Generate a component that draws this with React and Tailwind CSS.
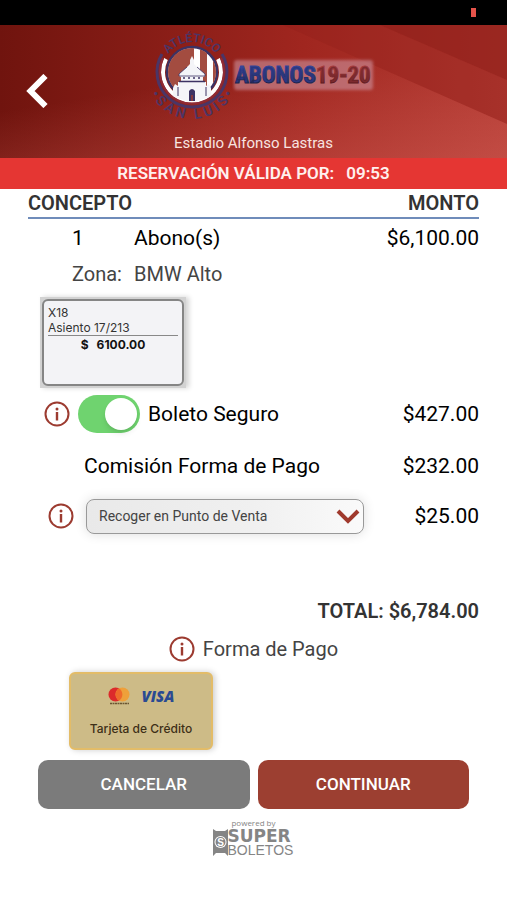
import React, { useState } from "react";

const InfoButton = ({ label }) => (
  <button type="button" aria-label={label} className="block shrink-0">
    <svg width="26" height="26" viewBox="0 0 26 26" fill="none">
      <circle cx="13" cy="13" r="11.5" stroke="#9c3b30" strokeWidth="2" />
      <circle cx="13" cy="8" r="1.5" fill="#9c3b30" />
      <path d="M13 11V19.500" stroke="#9c3b30" strokeWidth="2.4" />
    </svg>
  </button>
);

const ClubBadge = () => (
  <svg className="overflow-visible" width="80" height="96" viewBox="0 -6 80 96" role="img" aria-label="Atlético San Luis">
    <defs>
      <path id="badge-top" d="M10 39A30 30 0 0 1 70 39" />
      <path id="badge-bottom" d="M-7 39A47 47 0 0 0 87 39" />
      <clipPath id="badge-clip">
        <circle cx="40" cy="39" r="24" />
      </clipPath>
    </defs>
    <g fill="none">
      <path d="M10 21A35 35 0 1 0 70 21" stroke="#4b3566" strokeWidth="3" />
      <path d="M14 26A29 29 0 1 0 66 26" stroke="#fff" strokeWidth="4" />
      <path d="M11 25A32 32 0 1 0 69 25" stroke="#8f2b36" strokeWidth="2" />
    </g>
    <circle cx="40" cy="39" r="25" fill="#fff" stroke="#3c3263" strokeWidth="2.500" />
    <g clipPath="url(#badge-clip)">
      <path d="M14 12H42V66H14Z" fill="#a34c40" />
      <path d="M48 12H55V66H48ZM61 12H68V66H61Z" fill="#a34c40" />
      <path d="M12 61H68V66H12Z" fill="#fff" />
    </g>
    <path
      d="M40 23L42 27V31L45 34L53 41V43L51 44V49H54V53L57 51L59 55V63Q40 73 21 63V55L23 51L26 53V49H29V44L27 43V41L35 34L38 31V27Z"
      fill="#f4f4f8"
    />
    <path d="M35 34L27 41V43H53V41L45 34" fill="none" stroke="#3c3263" strokeWidth="0.8" />
    <path d="M27 48.500H53" stroke="#3c3263" strokeWidth="1.500" />
    <path d="M31 45H50" stroke="#3c3263" strokeWidth="1.500" strokeDasharray="2 3" />
    <path d="M37 68V58Q40 54 43 58V68Z" fill="#3c3263" />
    <path d="M26 54V63M54 54V63" stroke="#3c3263" strokeWidth="1" />
    <path d="M40 62V68" stroke="#9c3b30" strokeWidth="1.500" />
    <g fill="#4b3566" fontFamily="Roboto, sans-serif" fontWeight="600" textAnchor="middle">
      <text fontSize="12">
        <textPath href="#badge-top" startOffset="50%">ATLÉTICO</textPath>
      </text>
      <text fontSize="14">
        <textPath href="#badge-bottom" startOffset="50%">{"•\u00a0S\u00a0A\u00a0N\u00a0\u00a0\u00a0L\u00a0U\u00a0I\u00a0S\u00a0•"}</textPath>
      </text>
    </g>
  </svg>
);

const SeasonTitle = () => (
  <svg width="144" height="40" viewBox="0 0 144 40" role="img" aria-label="Abonos 19-20">
    <defs>
      <linearGradient id="season-blue" x1="0" y1="0" x2="0" y2="1">
        <stop offset="0.2" stopColor="#34459a" />
        <stop offset="0.9" stopColor="#191c3c" />
      </linearGradient>
      <linearGradient id="season-red" x1="0" y1="0" x2="0" y2="1">
        <stop offset="0.2" stopColor="#a33a3c" />
        <stop offset="0.9" stopColor="#4d1418" />
      </linearGradient>
      <filter id="season-glow" x="-10%" y="-30%" width="120%" height="160%">
        <feGaussianBlur stdDeviation="1.5" />
      </filter>
    </defs>
    <rect x="2" y="5" width="139" height="30" rx="3" fill="#c98a94" opacity="0.65" filter="url(#season-glow)" />
    <g
      fontFamily="'Roboto Condensed', 'Liberation Sans Narrow', 'Liberation Sans', sans-serif"
      fontSize="23"
      fontWeight="700"
      strokeWidth="1"
    >
      <text x="3" y="28" fill="#2b3780" stroke="url(#season-blue)">
        ABONOS
        <tspan fill="#7c2a2e" stroke="url(#season-red)">19-20</tspan>
      </text>
    </g>
  </svg>
);

const Header = () => (
  <header className="relative h-[133px] overflow-hidden bg-linear-to-r from-[#70140e] via-[#a0261f] via-60% to-[#b03830]">
    <svg className="absolute inset-0 h-full w-full" viewBox="0 0 507 133" preserveAspectRatio="none" aria-hidden="true">
      <defs>
        <linearGradient id="header-shine" x1="0.4" y1="0" x2="1" y2="1">
          <stop offset="0.3" stopColor="#d9645c" stopOpacity="0" />
          <stop offset="1" stopColor="#d9645c" stopOpacity="0.45" />
        </linearGradient>
      </defs>
      <path d="M283 0H380L507 55V99Z" fill="#8c1d17" opacity="0.25" />
      <path d="M380 0H507V55Z" fill="#8c1d17" opacity="0.6" />
      <path d="M0 0H283L507 99V133H0Z" fill="url(#header-shine)" />
    </svg>
    <button type="button" aria-label="Regresar" className="absolute top-[49px] left-[26px]">
      <svg width="22" height="34" viewBox="0 0 22 34" fill="none">
        <path d="M19.500 2L4.500 17L19.500 32" stroke="#fff" strokeWidth="6" />
      </svg>
    </button>
    <div className="relative flex flex-col items-center">
      <div className="flex h-[109px] items-start pt-[2px] pl-5">
        <ClubBadge />
        <div className="pt-7">
          <SeasonTitle />
        </div>
      </div>
      <p className="text-[15px] leading-[18px] text-[#f8e4e0]">Estadio Alfonso Lastras</p>
    </div>
  </header>
);

const Ticket = () => (
  <div className="ml-3 h-[91px] w-[146px] bg-[#d2d2d2] p-[2px] shadow-[3px_0_5px_#d4d4d4]">
    <div className="h-full rounded-md border-2 border-[#858585] bg-[#f3f3f6] px-1 pt-1 font-[Inter,sans-serif] text-xs leading-[15px] text-[#333]">
      <p>X18</p>
      <p className="border-b border-[#888]">Asiento 17/213</p>
      <p className="flex justify-center gap-2 pt-px font-bold text-[#111]">
        <span>$</span>
        <span>6100.00</span>
      </p>
    </div>
  </div>
);

const PoweredBy = () => (
  <footer className="mx-auto mt-2 w-[82px] text-[#858585]">
    <p className="text-center font-['Open_Sans',sans-serif] text-[8px] leading-3">powered by</p>
    <div className="flex">
      <svg width="15" height="27" viewBox="0 0 15 27" aria-hidden="true">
        <path d="M0 0L3 2H12L15 0V27L12 24H3L0 27Z" fill="#858585" />
        <circle cx="7.500" cy="13" r="6" fill="#fff" />
        <circle cx="7.500" cy="13" r="5" fill="#858585" />
        <text x="7.500" y="16.500" textAnchor="middle" fontSize="10" fontWeight="700" fill="#fff" fontFamily="Liberation Sans, sans-serif">S</text>
      </svg>
      <div>
        <p className="font-['DejaVu_Sans',sans-serif] text-[17px] leading-[14px] font-bold">SUPER</p>
        <p className="font-['Liberation_Sans',sans-serif] text-[14px] leading-[14px]">BOLETOS</p>
      </div>
    </div>
  </footer>
);

export default function App() {
  const [insured, setInsured] = useState(true);
  const [delivery, setDelivery] = useState("venta");

  return (
    <div className="min-h-screen bg-white font-[Roboto,sans-serif] text-black">
      <div className="flex h-[25px] items-center justify-end bg-black pr-[31px]">
        <span className="h-[9px] w-[5px] bg-[#e5534a]"></span>
      </div>
      <Header />
      <p className="flex h-[31px] items-center justify-center gap-3 bg-[#e53633] text-[17px] font-semibold text-[#fff0ee]">
        <span>RESERVACIÓN VÁLIDA POR:</span>
        <span>09:53</span>
      </p>

      <main className="px-7">
        <table className="w-full text-[21px] leading-[26px]">
          <thead>
            <tr className="h-[29px] border-b-2 border-[#6f8cba] text-[20px] text-[#333]">
              <th className="text-left font-semibold">CONCEPTO</th>
              <th className="text-right font-semibold">MONTO</th>
            </tr>
          </thead>
          <tbody>
            <tr className="h-[39px]">
              <td>
                <div className="flex pl-11">
                  <span className="w-[62px]">1</span>
                  <span>Abono(s)</span>
                </div>
              </td>
              <td className="text-right">$6,100.00</td>
            </tr>
            <tr className="h-[33px] text-[20px] text-[#444]">
              <td colSpan={2}>
                <div className="flex pl-11">
                  <span className="w-[62px]">Zona:</span>
                  <span>BMW Alto</span>
                </div>
              </td>
            </tr>
            <tr className="h-[98px]">
              <td colSpan={2} className="align-bottom">
                <Ticket />
              </td>
            </tr>
            <tr className="h-[52px]">
              <td>
                <div className="flex items-center pl-4">
                  <InfoButton label="Información de Boleto Seguro" />
                  <label className="flex items-center gap-2 pl-2">
                    <input
                      type="checkbox"
                      checked={insured}
                      onChange={(e) => setInsured(e.target.checked)}
                      className="flex h-[38px] w-[62px] appearance-none rounded-full bg-gray-300 p-[3px] before:size-8 before:rounded-full before:bg-white before:shadow-md checked:justify-end checked:bg-[#6fd36f]"
                    />
                    <span>Boleto Seguro</span>
                  </label>
                </div>
              </td>
              <td className="text-right">$427.00</td>
            </tr>
            <tr className="h-[52px]">
              <td className="pl-14">Comisión Forma de Pago</td>
              <td className="text-right">$232.00</td>
            </tr>
            <tr className="h-[48px]">
              <td>
                <div className="flex items-center gap-3 pl-5">
                  <InfoButton label="Información de entrega" />
                  <div className="relative w-[278px]">
                    <select
                      aria-label="Forma de entrega"
                      value={delivery}
                      onChange={(e) => setDelivery(e.target.value)}
                      className="block h-[35px] w-full appearance-none rounded-lg border border-[#999] bg-linear-to-r from-[#e9e9e9] via-[#f0f0f0] via-60% to-[#fafafa] px-3 text-[14px] text-[#444] shadow-[0_0_12px_#ddd]"
                    >
                      <option value="venta">Recoger en Punto de Venta</option>
                    </select>
                    <svg className="pointer-events-none absolute top-[9px] right-1" width="24" height="17" viewBox="0 0 24 17" fill="none">
                      <path d="M2 3L12 13L22 3" stroke="#a03a2d" strokeWidth="4" />
                    </svg>
                  </div>
                </div>
              </td>
              <td className="text-right">$25.00</td>
            </tr>
          </tbody>
          <tfoot>
            <tr className="h-[84px] text-[20px] font-semibold text-[#333]">
              <td colSpan={2} className="text-right align-bottom">TOTAL: $6,784.00</td>
            </tr>
          </tfoot>
        </table>

        <div className="mt-3 flex items-center justify-center gap-2">
          <InfoButton label="Información de forma de pago" />
          <h2 className="text-[20px] leading-[26px] text-[#444]">Forma de Pago</h2>
        </div>

        <button
          type="button"
          className="mt-[10px] ml-[41px] flex h-[78px] w-[144px] flex-col items-center rounded-md border-2 border-[#e3bc68] bg-[#cdbb87] pt-[11px] shadow-[2px_0_6px_#ccc]"
        >
          <span className="flex h-[22px] items-center gap-3">
            <svg width="22" height="18" viewBox="0 0 22 18" role="img" aria-label="Mastercard">
              <circle cx="7.500" cy="7.500" r="7" fill="#dc2a2b" />
              <circle cx="14.500" cy="7.500" r="7" fill="#eea03a" />
              <path d="M11 1.500A7 7 0 0 1 11 13.500A7 7 0 0 1 11 1.500Z" fill="#ee6a2b" />
              <path d="M2 16.500H21" stroke="#6b5632" strokeWidth="1.500" strokeDasharray="2 0.500" />
            </svg>
            <span className="font-['Open_Sans',sans-serif] text-[15px] leading-[18px] font-extrabold text-[#2a4a92] italic">VISA</span>
          </span>
          <span className="mt-[14px] font-[Inter,sans-serif] text-xs leading-[15px] font-medium text-[#3d2f17]">Tarjeta de Crédito</span>
        </button>

        <div className="mt-[10px] grid grid-cols-2 gap-2 px-[10px] text-[17px] font-medium text-white">
          <button type="button" className="h-[49px] rounded-[10px] bg-[#7b7b7b]">CANCELAR</button>
          <button type="button" className="h-[49px] rounded-[10px] bg-[#9c3f31]">CONTINUAR</button>
        </div>
      </main>
      <PoweredBy />
    </div>
  );
}
